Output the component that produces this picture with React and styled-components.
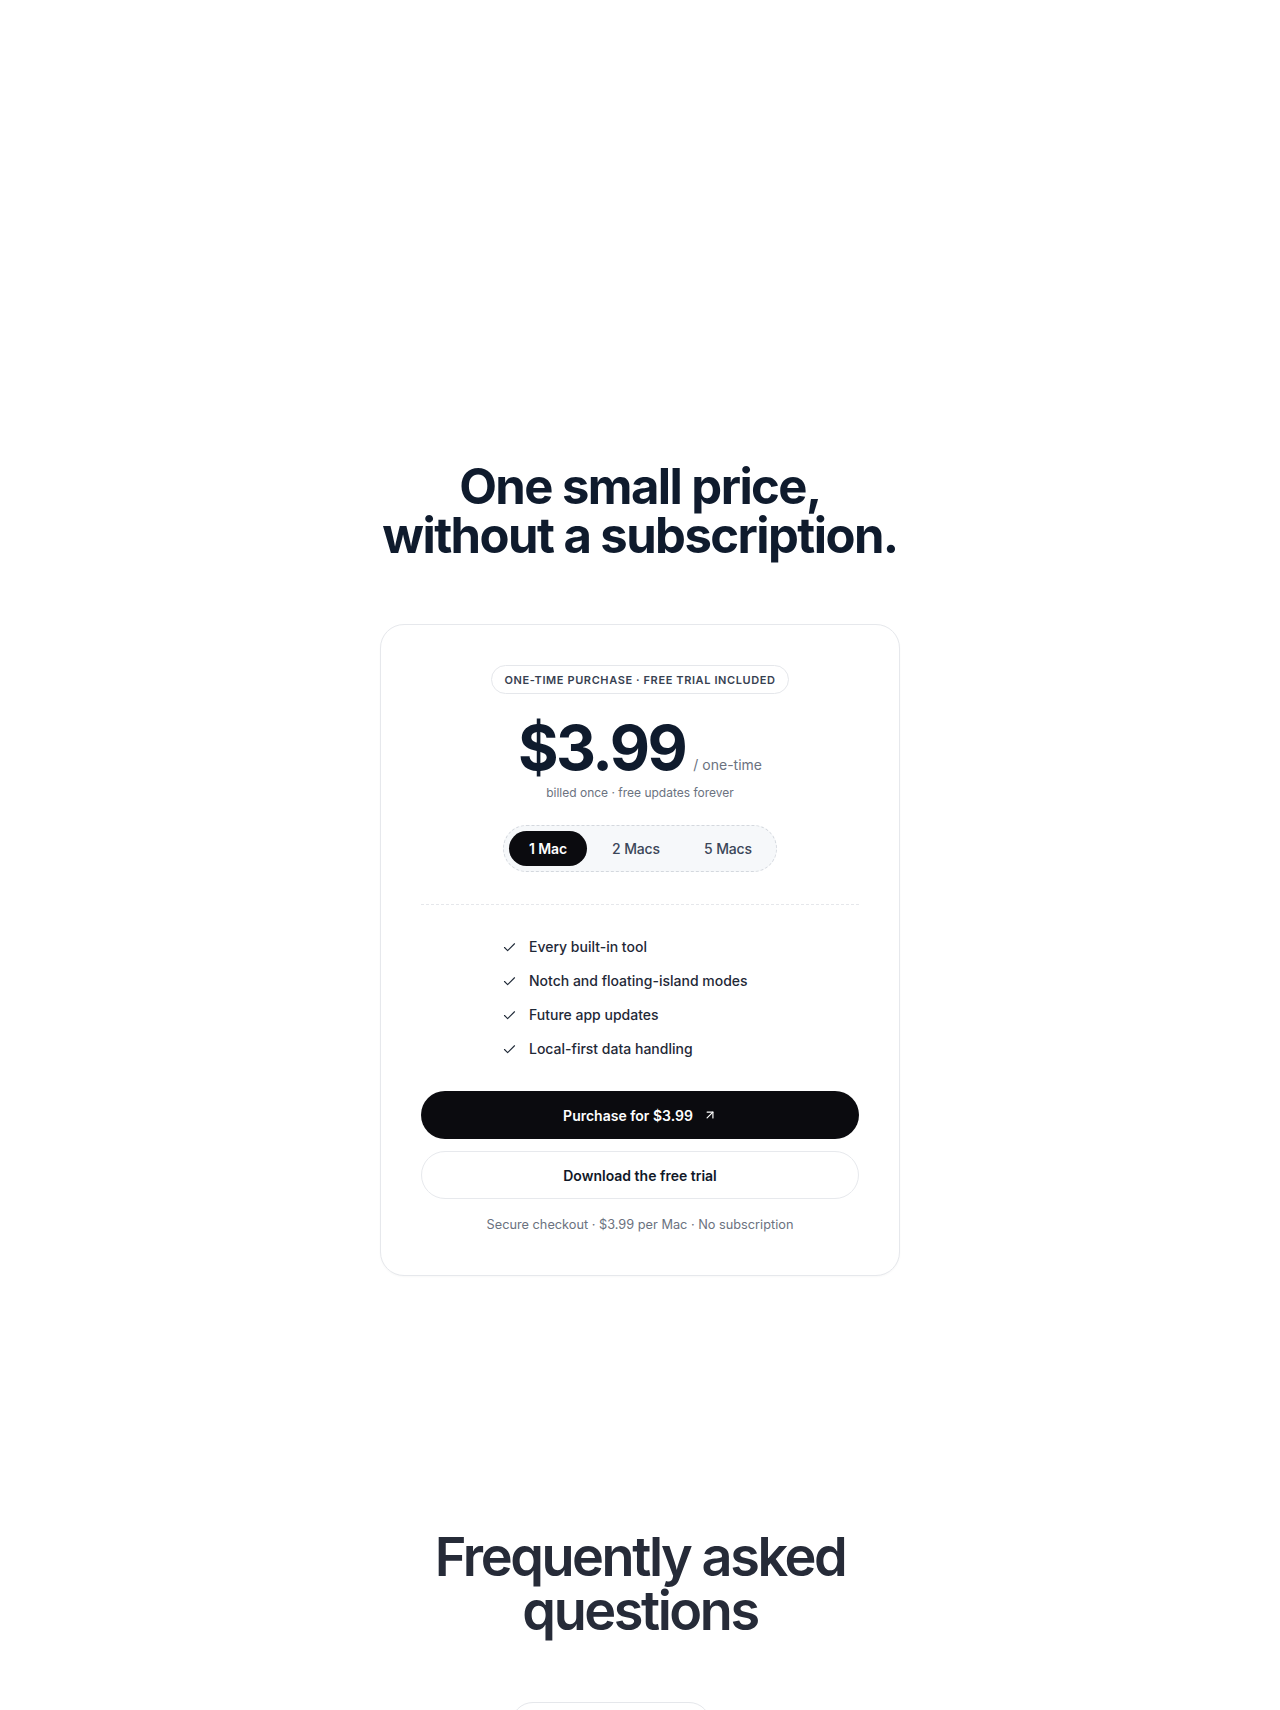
import React, { useState } from 'react'
import styled, { createGlobalStyle } from 'styled-components'
import { Check, ArrowUpRight } from 'lucide-react'

const GlobalStyle = createGlobalStyle`
  * { box-sizing: border-box; }
  body {
    margin: 0;
    background: #ffffff;
    font-family: Inter, 'Noto Sans', sans-serif;
    color: #0f172a;
    -webkit-font-smoothing: antialiased;
  }
`

const plans = [
  { id: 1, label: '1 Mac' },
  { id: 2, label: '2 Macs' },
  { id: 5, label: '5 Macs' },
]

const features = [
  'Every built-in tool',
  'Notch and floating-island modes',
  'Future app updates',
  'Local-first data handling',
]

export default function App() {
  const [seats, setSeats] = useState(1)

  return (
    <Page>
      <GlobalStyle />
      <PricingSection>
        <Title>
          One small price,
          <br />
          without a subscription.
        </Title>

        <Card>
          <Badge>One-time purchase · Free trial included</Badge>

          <PriceRow>
            <Price>$3.99</Price>
            <Per>/ one-time</Per>
          </PriceRow>
          <Billed>billed once · free updates forever</Billed>

          <Segmented>
            {plans.map((p) => (
              <Segment
                key={p.id}
                $active={seats === p.id}
                onClick={() => setSeats(p.id)}
              >
                {p.label}
              </Segment>
            ))}
          </Segmented>

          <Divider />

          <FeatureList>
            {features.map((f) => (
              <Feature key={f}>
                <Check size={15} strokeWidth={1.75} />
                {f}
              </Feature>
            ))}
          </FeatureList>

          <Actions>
            <PrimaryButton>
              Purchase for $3.99
              <ArrowUpRight size={14} strokeWidth={2} />
            </PrimaryButton>
            <SecondaryButton>Download the free trial</SecondaryButton>
          </Actions>

          <Footnote>Secure checkout · $3.99 per Mac · No subscription</Footnote>
        </Card>
      </PricingSection>

      <FaqSection>
        <FaqTitle>
          Frequently asked
          <br />
          questions
        </FaqTitle>
        <Tabs>
          <Tab $active>Pricing &amp; licenses</Tab>
          <Tab>Privacy</Tab>
        </Tabs>
      </FaqSection>
    </Page>
  )
}

const Page = styled.div`
  height: 1710px;
  overflow: hidden;
`

const PricingSection = styled.section`
  padding: 462px 24px 128px;
  display: flex;
  flex-direction: column;
  align-items: center;
`

const Title = styled.h2`
  margin: 0;
  font-size: 49px;
  line-height: 1;
  font-weight: 700;
  letter-spacing: -0.032em;
  text-align: center;
  color: #0f1b2d;
`

const Card = styled.div`
  margin-top: 64px;
  width: 520px;
  padding: 40px 40px 42px;
  border: 1px solid #e6e8ec;
  border-radius: 24px;
  background: #ffffff;
  box-shadow: 0 1px 2px rgba(15, 23, 42, 0.03);
  display: flex;
  flex-direction: column;
  align-items: center;
`

const Badge = styled.div`
  height: 29px;
  padding: 0 12px;
  display: flex;
  align-items: center;
  border: 1px solid #e5e7eb;
  border-radius: 999px;
  font-size: 11px;
  font-weight: 600;
  letter-spacing: 0.055em;
  text-transform: uppercase;
  color: #374151;
`

const PriceRow = styled.div`
  margin-top: 23px;
  display: flex;
  align-items: baseline;
  gap: 8px;
`

const Price = styled.span`
  font-size: 62px;
  line-height: 1;
  font-weight: 700;
  letter-spacing: -0.04em;
  color: #0f1b2d;
`

const Per = styled.span`
  font-size: 14px;
  color: #6b7280;
`

const Billed = styled.div`
  margin-top: 6px;
  font-size: 12px;
  line-height: 16px;
  color: #6b7280;
`

const Segmented = styled.div`
  margin-top: 24px;
  padding: 5px;
  display: flex;
  gap: 6px;
  border: 1px dashed #d4d8de;
  border-radius: 999px;
  background: #f6f8fa;
`

const Segment = styled.button`
  height: 35px;
  padding: 0 19px;
  border: 0;
  border-radius: 999px;
  font-family: inherit;
  font-size: 14px;
  font-weight: ${(p) => (p.$active ? 600 : 500)};
  letter-spacing: -0.01em;
  cursor: pointer;
  background: ${(p) => (p.$active ? '#0b0b0f' : 'transparent')};
  color: ${(p) => (p.$active ? '#ffffff' : '#3b4658')};
  min-width: ${(p) => (p.$active ? '78px' : '86px')};
`

const Divider = styled.hr`
  align-self: stretch;
  margin: 32px 0 0;
  border: 0;
  border-top: 1px dashed #e5e7eb;
`

const FeatureList = styled.ul`
  list-style: none;
  margin: 32px 0 0;
  padding: 0;
  width: 276px;
  display: flex;
  flex-direction: column;
  gap: 14px;
`

const Feature = styled.li`
  display: flex;
  align-items: center;
  gap: 12px;
  font-size: 14px;
  line-height: 20px;
  font-weight: 500;
  color: #1f2937;

  svg {
    flex-shrink: 0;
    color: #1f2937;
  }
`

const Actions = styled.div`
  align-self: stretch;
  margin-top: 32px;
  display: flex;
  flex-direction: column;
  gap: 12px;
`

const PrimaryButton = styled.button`
  height: 48px;
  border: 0;
  border-radius: 999px;
  background: #0b0b0f;
  color: #ffffff;
  font-family: inherit;
  font-size: 14px;
  font-weight: 600;
  display: flex;
  align-items: center;
  justify-content: center;
  gap: 10px;
  cursor: pointer;
`

const SecondaryButton = styled.button`
  height: 48px;
  border: 1px solid #e7e9ed;
  border-radius: 999px;
  background: #ffffff;
  color: #111827;
  font-family: inherit;
  font-size: 14px;
  font-weight: 600;
  cursor: pointer;
`

const Footnote = styled.p`
  margin: 18px 0 0;
  font-size: 12.75px;
  line-height: 16px;
  color: #6b7280;
`

const FaqSection = styled.section`
  padding: 126px 24px 80px;
  display: flex;
  flex-direction: column;
  align-items: center;
`

const FaqTitle = styled.h2`
  margin: 0;
  font-size: 54px;
  line-height: 1;
  font-weight: 600;
  letter-spacing: -0.045em;
  text-align: center;
  color: #262b38;
`

const Tabs = styled.div`
  margin-top: 64px;
  display: flex;
`

const Tab = styled.button`
  height: 44px;
  width: ${(p) => (p.$active ? '200px' : '58px')};
  border: 1px solid ${(p) => (p.$active ? '#e5e7eb' : 'transparent')};
  border-radius: 999px;
  background: #ffffff;
  font-family: inherit;
  font-size: 14px;
  color: #111827;
`
